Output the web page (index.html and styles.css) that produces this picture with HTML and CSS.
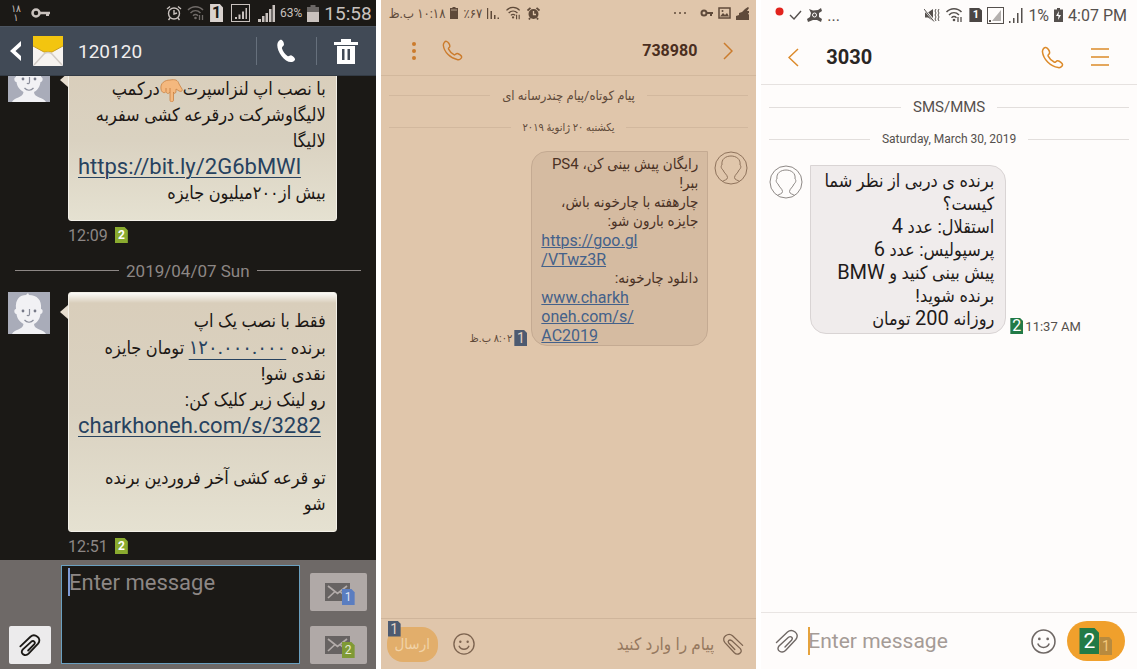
FILE: index.html
```html
<!DOCTYPE html>
<html lang="fa">
<head>
    <meta charset="UTF-8">
    <meta name="viewport" content="width=device-width, initial-scale=1.0">
    <title>SMS</title>
    <link rel="stylesheet" href="styles.css">
</head>
<body>
    <!-- Shared icons -->
    <svg class="sprite" aria-hidden="true">
        <symbol id="clip" viewBox="0 0 24 24">
            <path d="M1.500 13.500 L12.500 3 C17 -1 25.500 4.500 20.800 10.500 L10.500 21.500 C7 25 0.500 21.500 4 17 L13.500 8.300 C16 6.500 18.500 9 16.500 11.200 L10 18" fill="none" stroke="currentColor" stroke-linecap="round"/>
        </symbol>
        <symbol id="smile" viewBox="0 0 24 24">
            <circle cx="12" cy="12" r="11" fill="none" stroke="currentColor" stroke-width="1.500"/>
            <circle cx="8" cy="9.500" r="1.300" fill="currentColor"/>
            <circle cx="16" cy="9.500" r="1.300" fill="currentColor"/>
            <path d="M6.500 14 C8.500 19 15.500 19 17.500 14" fill="none" stroke="currentColor" stroke-width="1.500"/>
        </symbol>
        <symbol id="call" viewBox="0 0 24 24">
            <path d="M5 1.500 C7 2 9 5 9 7 C9 9 6.500 8.500 7.500 10.500 C9 13.500 11 15.500 14 17 C15.500 17.500 15.500 15.300 17.500 15.500 C19.500 15.800 22.500 18 22.500 19.500 C22.500 21 20 23 18 22.500 C9.500 21 2.500 14 1.500 6 C1.500 3.500 3.500 1.200 5 1.500 Z" fill="none" stroke="currentColor" stroke-width="1.600" stroke-linejoin="round"/>
        </symbol>
        <symbol id="person" viewBox="0 0 34 34">
            <circle cx="17" cy="17" r="16" fill="none" stroke="currentColor"/>
            <path d="M8.500 30.500 C10 29 13.500 29 13.500 26.500 C13.500 24 10 22 9 19 C6.500 17 7 14.500 8 14 C7 8 12 5 17 5 C22 5 27 8 26 14 C27 14.500 27.500 17 25 19 C24 22 20.500 24 20.500 26.500 C20.500 29 24 29 25.500 30.500" fill="none" stroke="currentColor"/>
        </symbol>
        <symbol id="face" viewBox="0 0 42 42">
            <rect width="42" height="42" fill="#a9acb9"/>
            <path d="M4 42 C6 37 15 38 15.500 32 C10 29 9 25 8.500 22 C6 22 5.500 17 8 17 C7 7 12 3 18 3 L20 1 L21 3 C29 3 34 8 33 17 C35.500 17 35 22 32.500 22 C32 26 30 30 26 32 C26 38 36 37 38 42 Z" fill="#f1f1f4"/>
            <path d="M21.500 17 V22 C21.500 24 19.500 24 19 23 M16.500 28 C19 31 23 31 25.500 28" fill="none" stroke="#8b8e9b" stroke-width="1.200"/>
            <circle cx="15" cy="19" r="1.400" fill="#777a88"/>
            <circle cx="27" cy="19" r="1.400" fill="#777a88"/>
        </symbol>
        <symbol id="wifi" viewBox="0 0 18 16">
            <g fill="none" stroke="currentColor" stroke-width="1.500">
                <path d="M1 5 C5 0.500 12 0.500 16 5 M3.500 8 C6.500 5 10.500 5 13.500 8 M6 10.700 C7.500 9.300 9.500 9.300 11 10.700"/>
                <path d="M12.500 10 V15 M15.500 10 V15" stroke-width="1.300"/>
            </g>
            <circle cx="8.500" cy="13" r="1.300" fill="currentColor"/>
        </symbol>
        <symbol id="envelope" viewBox="0 0 26 18">
            <rect width="25" height="18" fill="#676362"/>
            <path d="M3 3 L12.500 10.500 L22 3 M3 15 L9.500 9 M22 15 L15.500 9" fill="none" stroke="#b3acaa" stroke-width="1.700"/>
        </symbol>
    </svg>

    <main class="phones">
        <!-- Dark phone -->
        <section class="phone phone-dark" dir="ltr">
            <div class="status">
                <span class="status-day"><span>۱۸</span><span>۱</span></span>
                <svg width="20" height="12" viewBox="0 0 20 12"><circle cx="5" cy="6" r="3.500" fill="none" stroke="currentColor" stroke-width="2.500"/><path d="M9 4.800 H19 V7.200 H18 V9 H15 V7.200 H9 Z" fill="currentColor"/></svg>
                <span class="space"></span>
                <svg width="16" height="16" viewBox="0 0 16 16" fill="none" stroke="currentColor" stroke-width="1.400"><circle cx="8" cy="8.500" r="5.500"/><path d="M8 5 V9 L11 8 M1 4 L4 1.500 M12 1.500 L15 4 M4 13 L2.500 15 M12 13 L13.500 15"/></svg>
                <svg class="dim" width="18" height="16"><use href="#wifi"/></svg>
                <span class="sim sim-light">1</span>
                <svg class="boxed" width="19" height="18" viewBox="0 0 19 18"><rect x="0.500" y="0.500" width="18" height="17" fill="none" stroke="currentColor"/><path d="M4 13 H6 V15 H4 Z M7.500 10.500 H9.500 V15 H7.500 Z M11 7.500 H13 V15 H11 Z M14.500 4 H16 V15 H14.500 Z" fill="currentColor"/></svg>
                <svg width="17" height="17" viewBox="0 0 17 17"><path d="M0 14 H3 V17 H0 Z M4 11 H6.500 V17 H4 Z M7.500 8 H10 V17 H7.500 Z M11 4 H13.500 V17 H11 Z M14.500 0 H17 V17 H14.500 Z" fill="currentColor"/></svg>
                <span class="status-small">63%</span>
                <svg width="12" height="17" viewBox="0 0 12 17"><path d="M3.500 0 H8.500 V2 H12 V17 H0 V2 H3.500 Z" fill="#6b6765"/><path d="M0 7 H12 V17 H0 Z" fill="currentColor"/></svg>
                <span class="status-clock">15:58</span>
            </div>
            <header class="bar">
                <button class="icon-btn" aria-label="Back"><svg width="12" height="22" viewBox="0 0 12 22"><path d="M11 1 V6 L5.500 11 L11 16 V21 L0 11 Z" fill="#fff"/></svg></button>
                <svg class="mail" width="30" height="30" viewBox="0 0 30 30"><rect width="30" height="30" rx="1" fill="#f6f3f0"/><path d="M0 0 H30 V10 L19 16 H11 L0 10 Z" fill="#f3c50f"/><path d="M0 10 L11 16 H19 L30 10" fill="none" stroke="#c99d1c"/><path d="M1 29 L11 18 C13 16 17 16 19 18 L29 29" fill="none" stroke="#d2ccc6" stroke-width="1.500"/></svg>
                <h1>120120</h1>
                <button class="bar-btn" aria-label="Call"><svg width="20" height="24" viewBox="0 0 20 24"><path d="M4 1 C6 0 8 3 8 5.500 C8 7.500 5.500 7.500 6 9.500 C7 12.500 9 15 11.500 17 C13 18 14 15.800 15.500 16.500 C18 17.500 20 20 18.500 21.500 C15.500 25 9.500 22.500 5.500 17 C1 11 -0.500 3.500 4 1 Z" fill="#fff"/></svg></button>
                <button class="bar-btn" aria-label="Delete"><svg width="24" height="25" viewBox="0 0 24 25"><path d="M7 0 H17 V3 H24 V6 H0 V3 H7 Z" fill="#fff"/><path d="M3 7 H21 V25 H3 Z M8 10 V21 H10.500 V10 Z M13.500 10 V21 H16 V10 Z" fill="#fff" fill-rule="evenodd"/></svg></button>
            </header>
            <div class="thread">
                <article class="message">
                    <svg class="avatar" width="42" height="42"><use href="#face"/></svg>
                    <div class="bubble" dir="rtl">
                        <p>با نصب اپ لنزاسپرت<svg class="hand" width="23" height="23" viewBox="0 0 23 23"><path d="M1 10 C0 4 5 1 10 1 C15 0 18 1 19 5 L22 10 C23 12 21 13 19 12 L16 10 V12 C16 15 13.500 15 13.500 13 V21 C13.500 23.500 10 23.500 10 21 V13 C9 15 6.500 15 6 12.500 C5 14.500 1.500 14 1 10 Z" fill="#f4b87e" stroke="#c98243" stroke-width="0.800"/><path d="M6 12 V9 M10 13 V9" stroke="#c77a3d" stroke-width="0.800"/></svg>درکمپ<br>لالیگاوشرکت درقرعه کشی سفربه<br>لالیگا</p>
                        <a href="#" dir="ltr">https://bit.ly/2G6bMWl</a>
                        <p>بیش از۲۰۰میلیون جایزه</p>
                    </div>
                    <div class="stamp">12:09 <span class="sim sim-green">2</span></div>
                </article>
                <div class="rule"><span>2019/04/07 Sun</span></div>
                <article class="message">
                    <svg class="avatar" width="42" height="42"><use href="#face"/></svg>
                    <div class="bubble" dir="rtl">
                        <p>فقط با نصب یک اپ<br>برنده <a class="amount" href="#">۱۲۰.۰۰۰.۰۰۰</a> تومان جایزه<br>نقدی شو!<br>رو لینک زیر کلیک کن:</p>
                        <a href="#" dir="ltr">charkhoneh.com/s/3282</a>
                        <p><br>تو قرعه کشی آخر فروردین برنده<br>شو</p>
                    </div>
                    <div class="stamp">12:51 <span class="sim sim-green">2</span></div>
                </article>
            </div>
            <form class="composer">
                <button type="button" class="attach" aria-label="Attach"><svg width="22" height="24" stroke-width="2"><use href="#clip"/></svg></button>
                <label class="field"><textarea placeholder="Enter message" aria-label="Message"></textarea></label>
                <div class="sends">
                    <button type="button" aria-label="Send with SIM 1"><svg width="26" height="18"><use href="#envelope"/></svg><span class="sim sim-blue">1</span></button>
                    <button type="button" aria-label="Send with SIM 2"><svg width="26" height="18"><use href="#envelope"/></svg><span class="sim sim-olive">2</span></button>
                </div>
            </form>
        </section>

        <!-- Tinted phone, right to left -->
        <section class="phone phone-tan" dir="rtl">
            <div class="status">
                <svg width="13" height="13" viewBox="0 0 13 13"><path d="M0 13 V9 L3 8 V6 L6 5 L9 2 L12 0 L13 1 L11 4 H13 V6 H12 L13 8 V13 Z" fill="currentColor"/></svg>
                <svg width="13" height="12" viewBox="0 0 13 12"><rect x="1" y="1" width="11" height="10" fill="none" stroke="currentColor" stroke-width="1.500"/><path d="M2 9.500 L5 6 L7 8 L9 6 L11 9.500 Z" fill="currentColor"/><circle cx="4.500" cy="4" r="1" fill="currentColor"/></svg>
                <svg width="13" height="8" viewBox="0 0 13 8"><circle cx="4" cy="4" r="2.500" fill="none" stroke="currentColor" stroke-width="2"/><path d="M6 3 H13 V5 H12 V7 H10 V5 H6 Z" fill="currentColor"/></svg>
                <svg class="dots" width="14" height="4" viewBox="0 0 14 4" fill="currentColor"><circle cx="2" cy="2" r="1"/><circle cx="7" cy="2" r="1"/><circle cx="12" cy="2" r="1"/></svg>
                <span class="space"></span>
                <svg width="13" height="13" viewBox="0 0 13 13"><circle cx="6.500" cy="7" r="5" fill="currentColor"/><path d="M0.500 3.500 L3.500 0.800 M9.500 0.800 L12.500 3.500 M3 11 L2 12.500 M10 11 L11 12.500" stroke="currentColor" stroke-width="1.800"/><path d="M6.500 4 V7.500 H9" fill="none" stroke="#e0c6ab" stroke-width="1.300"/></svg>
                <svg width="17" height="14"><use href="#wifi"/></svg>
                <svg width="13" height="13" viewBox="0 0 13 13"><path d="M0 1 H1.200 V12 H0 Z M3.500 4 H5 V12 H3.500 Z M7 8 H8.500 V12 H7 Z M10.500 10.500 H12 V12 H10.500 Z" fill="currentColor"/></svg>
                <span>٪۶۷</span>
                <svg width="8" height="12" viewBox="0 0 8 12"><path d="M2.500 0 H5.500 V1 H8 V12 H0 V1 H2.500 Z" fill="currentColor"/><path d="M1 3 H7" stroke="#b59f89"/></svg>
                <span>۱۰:۱۸ ب.ظ</span>
            </div>
            <header class="bar">
                <button class="icon-btn" aria-label="بازگشت"><svg width="10" height="18" viewBox="0 0 10 18"><path d="M1 1 L9 9 L1 17" fill="none" stroke="currentColor" stroke-width="1.500"/></svg></button>
                <h1>738980</h1>
                <button class="icon-btn" aria-label="تماس"><svg width="21" height="21"><use href="#call"/></svg></button>
                <button class="icon-btn" aria-label="منو"><svg width="4" height="18" viewBox="0 0 4 18" fill="currentColor"><circle cx="2" cy="2" r="2"/><circle cx="2" cy="9" r="2"/><circle cx="2" cy="16" r="2"/></svg></button>
            </header>
            <div class="thread">
                <div class="rule"><span>پیام کوتاه/پیام چندرسانه ای</span></div>
                <div class="rule rule-date"><span>یکشنبه ۲۰ ژانویهٔ ۲۰۱۹</span></div>
                <article class="message">
                    <svg class="avatar" width="34" height="34"><use href="#person"/></svg>
                    <div class="bubble">
                        <p>رایگان پیش بینی کن، PS4<br>ببر!<br>چارهفته با چارخونه باش،<br>جایزه بارون شو:</p>
                        <a href="#" dir="ltr">https://goo.gl<br>/VTwz3R</a>
                        <p>دانلود چارخونه:</p>
                        <a href="#" dir="ltr">www.charkh<br>oneh.com/s/<br>AC2019</a>
                    </div>
                    <div class="stamp"><span class="sim sim-navy">1</span> ۸:۰۲ ب.ظ</div>
                </article>
            </div>
            <form class="composer">
                <button type="button" class="icon-btn flip" aria-label="پیوست"><svg width="22" height="24" stroke-width="1.400"><use href="#clip"/></svg></button>
                <input type="text" placeholder="پیام را وارد کنید" aria-label="پیام">
                <button type="button" class="icon-btn" aria-label="شکلک"><svg width="22" height="22"><use href="#smile"/></svg></button>
                <button type="button" class="send">ارسال<span class="sim sim-navy">1</span></button>
            </form>
        </section>

        <!-- Light phone -->
        <section class="phone phone-light" dir="ltr">
            <div class="status">
                <svg class="record" width="9" height="9" viewBox="0 0 9 9"><circle cx="4.500" cy="4.500" r="4" fill="#e2231d"/></svg>
                <svg width="13" height="10" viewBox="0 0 13 10"><path d="M1 5 L5 9 L12 1" fill="none" stroke="currentColor" stroke-width="1.400"/></svg>
                <svg width="15" height="14" viewBox="0 0 15 14"><path d="M2 1 L6 2.500 L11 2 L14 0 L15 3 L12 5 V9 L15 11 L14 14 L10 12 H6 L1 14 L0 11 L3 9 L4 5 Z" fill="currentColor"/><circle cx="7.500" cy="7" r="2" fill="none" stroke="#fefcfb"/></svg>
                <span class="ellipsis">...</span>
                <span class="space"></span>
                <svg width="16" height="14" viewBox="0 0 16 14"><path d="M1 4.500 H4 L9 1 V13 L4 9.500 H1 Z" fill="currentColor"/><path d="M0.500 1.500 L10 13" stroke="#fefcfb" stroke-width="2"/><path d="M0 1 L10 13.500" stroke="currentColor" stroke-width="1"/><path d="M12 1 L11 3 L12 5 L11 7 L12 9 L11 11 L12 13 M15 1 L14 3 L15 5 L14 7 L15 9 L14 11 L15 13" fill="none" stroke="currentColor"/></svg>
                <svg width="19" height="16"><use href="#wifi"/></svg>
                <span class="sim sim-dark">1</span>
                <svg width="17" height="17" viewBox="0 0 17 17"><rect x="0.500" y="0.500" width="16" height="16" fill="none" stroke="currentColor"/><path d="M14 3 V14 H5 Z" fill="#b4b0ae"/><path d="M2 13 H4 V15 H2 Z" fill="currentColor"/></svg>
                <svg width="14" height="15" viewBox="0 0 14 15"><path d="M0 13 H1.500 V15 H0 Z M4 10 H5.500 V15 H4 Z M8 5 H9.500 V15 H8 Z M12 0 H13.500 V15 H12 Z" fill="currentColor"/></svg>
                <span>1%</span>
                <svg width="9" height="14" viewBox="0 0 9 14"><path d="M3 0 H6 V1.500 H9 V14 H0 V1.500 H3 Z" fill="currentColor"/><path d="M5 3 L2 8 H4.500 L4 12 L7 7 H4.500 Z" fill="#fff"/></svg>
                <span>4:07 PM</span>
            </div>
            <header class="bar">
                <button class="icon-btn" aria-label="Back"><svg width="11" height="19" viewBox="0 0 11 19"><path d="M10 1 L1 9.500 L10 18" fill="none" stroke="currentColor" stroke-width="1.500"/></svg></button>
                <h1>3030</h1>
                <button class="icon-btn" aria-label="Call"><svg width="23" height="23"><use href="#call"/></svg></button>
                <button class="icon-btn" aria-label="Menu"><svg width="18" height="20" viewBox="0 0 18 20"><path d="M0 2 H18 M0 10 H18 M0 18 H18" stroke="currentColor" stroke-width="1.700"/></svg></button>
            </header>
            <div class="thread">
                <div class="rule"><span>SMS/MMS</span></div>
                <div class="rule rule-date"><span>Saturday, March 30, 2019</span></div>
                <article class="message">
                    <svg class="avatar" width="34" height="34"><use href="#person"/></svg>
                    <div class="bubble" dir="rtl">
                        <p>برنده ی دربی از نظر شما<br>کیست؟<br>استقلال: عدد <span class="latin">4</span><br>پرسپولیس: عدد <span class="latin">6</span><br>پیش بینی کنید و <span class="latin">BMW</span><br>برنده شوید!<br>روزانه <span class="latin">200</span> تومان</p>
                    </div>
                    <div class="stamp"><span class="sim sim-forest">2</span> 11:37 AM</div>
                </article>
            </div>
            <form class="composer">
                <button type="button" class="icon-btn" aria-label="Attach"><svg width="24" height="26" stroke-width="1.400"><use href="#clip"/></svg></button>
                <label class="field"><input type="text" placeholder="Enter message" aria-label="Message"></label>
                <button type="button" class="icon-btn" aria-label="Emoji"><svg width="25" height="25"><use href="#smile"/></svg></button>
                <button type="button" class="send" aria-label="Send with SIM 2"><span class="sim sim-forest">2</span><span class="sim sim-back">1</span></button>
            </form>
        </section>
    </main>
</body>
</html>
```
FILE: styles.css
```css
* {
    margin: 0;
    padding: 0;
    box-sizing: border-box;
}

body {
    background-color: #fff;
    font-family: Roboto, "DejaVu Sans Condensed", "DejaVu Sans", sans-serif;
}

button,
input,
textarea {
    font-family: inherit;
    border: none;
    background: none;
    color: inherit;
    outline: none;
}

button {
    cursor: pointer;
}

svg {
    display: block;
    flex: none;
}

.sprite {
    position: absolute;
    width: 0;
    height: 0;
}

.phones {
    display: grid;
    grid-template-columns: repeat(3, minmax(0, 1fr));
    gap: 5px;
    height: 100vh;
}

.phone {
    display: flex;
    flex-direction: column;
    min-height: 0;
    overflow: hidden;
}

.status {
    display: flex;
    align-items: center;
    flex: none;
    white-space: nowrap;
}

.space {
    flex: 1;
}

.bar {
    display: flex;
    align-items: center;
    flex: none;
}

.bar h1 {
    flex: 1;
}

.icon-btn {
    display: flex;
    align-items: center;
    justify-content: center;
    flex: none;
}

.thread {
    flex: 1;
    min-height: 0;
    overflow: hidden;
}

.rule {
    display: flex;
    align-items: center;
    white-space: nowrap;
}

.rule::before,
.rule::after {
    content: "";
    flex: 1;
    height: 1px;
    background-color: currentColor;
}

.bubble {
    white-space: nowrap;
}

.bubble a {
    display: block;
}

/* Little SIM card with a cut corner */
.sim {
    display: inline-flex;
    align-items: center;
    justify-content: center;
    flex: none;
    width: 13px;
    height: 16px;
    font-size: 12px;
    line-height: 16px;
    color: #fff;
    clip-path: polygon(0 0, 75% 0, 100% 20%, 100% 100%, 0 100%);
}

.sim-light { background-color: #d9d2ce; color: #1b1916; font-size: 16px; font-weight: bold; height: 18px; }
.sim-green { background-color: #8aab2f; font-weight: bold; }
.sim-blue { background-color: #5a7dc0; color: #dfe3f2; }
.sim-olive { background-color: #7f9a35; color: #e8ecd4; }
.sim-navy { background-color: #4d5a70; color: #e3d3c4; font-size: 14px; }
.sim-dark { background-color: #4b4644; font-weight: bold; height: 14px; }
.sim-forest { background-color: #227a46; font-size: 16px; }
.sim-back { background-color: #b88a3e; color: #f3c77b; font-size: 14px; }

/* Dark phone */
.phone-dark {
    background-color: #1b1916;
    color: #8d8785;
}

.phone-dark .status {
    height: 26px;
    padding: 0 4px 0 9px;
    gap: 5px;
    color: #c9c2be;
}

.status-day {
    display: flex;
    flex-direction: column;
    align-items: center;
    width: 14px;
    margin-right: 3px;
    font-size: 10px;
    line-height: 9px;
}

.phone-dark .status .dim {
    color: #6f6a67;
}

.phone-dark .status .boxed {
    margin: 0 3px;
}

.status-small {
    font-size: 12px;
}

.status-clock {
    font-size: 19px;
}

.phone-dark .bar {
    height: 50px;
    padding-left: 10px;
    background-color: #414a56;
    border-top: 1px solid #4c5561;
    border-bottom: 1px solid #333b45;
}

.phone-dark .mail {
    margin: 0 15px 0 11px;
}

.phone-dark .bar h1 {
    font-size: 19px;
    font-weight: normal;
    color: #f0eeee;
}

.bar-btn {
    display: flex;
    align-items: center;
    justify-content: center;
    width: 60px;
    height: 28px;
    border-left: 1px solid #66707c;
}

.phone-dark .thread {
    display: flex;
    flex-direction: column;
    justify-content: flex-end;
}

.phone-dark .message {
    display: grid;
    grid-template-columns: 42px 1fr;
    column-gap: 18px;
    padding: 0 39px 0 8px;
    flex: none;
}

.phone-dark .bubble {
    position: relative;
    padding: 15px 10px 14px 9px;
    border: 1px solid #f3f0e8;
    border-radius: 3px;
    background: linear-gradient(#fbfaf7, #d9cebb 10px, #dad2c1 50%, #e5e1d1);
    color: #1d1815;
    font-size: 18px;
    line-height: 26px;
}

.phone-dark .bubble::before {
    content: "";
    position: absolute;
    left: -9px;
    top: 12px;
    border-top: 7px solid transparent;
    border-bottom: 7px solid transparent;
    border-right: 8px solid #e6ddcf;
}

.phone-dark .bubble a {
    color: #27425f;
    font-size: 22px;
    text-decoration-thickness: 1px;
    text-underline-offset: 3px;
}

.phone-dark .bubble .amount {
    display: inline;
    font-size: 20px;
    text-underline-offset: 5px;
}

.hand {
    display: inline-block;
    vertical-align: -7px;
}

.phone-dark .stamp {
    grid-column: 2;
    display: flex;
    align-items: center;
    gap: 7px;
    height: 28px;
    font-size: 16px;
}

.phone-dark .rule {
    height: 43px;
    padding: 0 15px;
    gap: 7px;
    font-size: 17px;
    flex: none;
}

.phone-dark .composer {
    display: flex;
    align-items: flex-end;
    gap: 10px;
    padding: 5px 9px;
    background-color: #6e6967;
}

.attach {
    display: flex;
    align-items: center;
    justify-content: center;
    width: 42px;
    height: 38px;
    border-radius: 2px;
    background-color: #ecebec;
    color: #1b1916;
}

.field {
    position: relative;
    display: flex;
    flex: 1;
    min-width: 0;
}

/* Text cursor */
.field::before {
    content: "";
    position: absolute;
    left: 7px;
    top: 3px;
    width: 2px;
    height: 28px;
    background-color: #7f9bd6;
}

.field textarea {
    width: 100%;
    height: 99px;
    padding: 4px 7px;
    border: 1px solid #6aa0c0;
    background-color: #1b1916;
    font-size: 22px;
    line-height: 26px;
    resize: none;
}

.field textarea::placeholder {
    color: #8d8785;
}

.sends {
    display: flex;
    flex-direction: column;
    gap: 15px;
}

.sends button {
    display: flex;
    align-items: center;
    justify-content: center;
    width: 57px;
    height: 38px;
    padding-left: 3px;
    border-radius: 2px;
    background-color: #b0a9a7;
}

.sends .sim {
    margin: 10px 0 0 -9px;
}

/* Tinted phone */
.phone-tan {
    background-color: #e0c6ab;
    color: #5f4a3a;
}

.phone-tan .status {
    height: 26px;
    padding: 0 7px 0 8px;
    gap: 5px;
    font-size: 13px;
}

.phone-tan .dots {
    margin-right: 8px;
}

.phone-tan .bar {
    height: 50px;
    padding: 0 23px 0 31px;
    gap: 26px;
    color: #cb7b2c;
    border-bottom: 1px solid #d2b89d;
}

.phone-tan .bar h1 {
    font-size: 16px;
    color: #4a2e20;
}

.phone-tan .rule {
    height: 38px;
    padding: 0 8px;
    gap: 12px;
    font-size: 13px;
}

.phone-tan .rule-date {
    height: 26px;
    margin-bottom: 11px;
    font-size: 11px;
}

.phone-tan .rule::before,
.phone-tan .rule::after {
    background-color: #d2b89e;
}

.phone-tan .message,
.phone-light .message {
    display: flex;
    align-items: flex-start;
    padding: 0 8px;
}

.phone-tan .avatar {
    color: #8f735c;
}

.phone-tan .bubble {
    width: 177px;
    margin: 0 6px 0 4px;
    padding: 3px 9px 0;
    border: 1px solid #c4aa92;
    border-radius: 16px 0 16px 16px;
    background-color: #d5bba1;
    color: #4b3225;
    font-size: 15px;
    line-height: 19px;
}

.phone-tan .bubble a {
    color: #44618a;
    font-size: 16px;
    text-decoration-thickness: 1px;
}

.phone-tan .stamp,
.phone-light .stamp {
    display: flex;
    align-items: center;
    align-self: flex-end;
    gap: 2px;
    white-space: nowrap;
}

.phone-tan .stamp {
    font-size: 11px;
}

.phone-tan .composer,
.phone-light .composer {
    display: flex;
    align-items: center;
}

.phone-tan .composer {
    height: 51px;
    padding: 0 12px 0 6px;
    border-top: 1px solid #cfb59b;
    color: #7d6450;
}

.flip {
    transform: scaleX(-1);
}

.phone-tan .composer input {
    flex: 1;
    min-width: 0;
    margin-right: 8px;
    font-size: 17px;
}

.phone-tan .composer input::placeholder {
    color: #96795f;
}

.send {
    position: relative;
    flex: none;
    border-radius: 20px;
}

.phone-tan .send {
    width: 51px;
    height: 35px;
    margin-right: 15px;
    border-radius: 16px;
    background-color: #e2ae6b;
    color: #f1d3a8;
    font-size: 15px;
}

.phone-tan .send .sim {
    position: absolute;
    left: 1px;
    top: -6px;
}

/* Light phone */
.phone-light {
    background-color: #fefcfb;
    color: #55504d;
}

.phone-light .status {
    height: 30px;
    padding: 0 10px 0 14px;
    gap: 5px;
    font-size: 16px;
}

.phone-light .status .sim {
    font-size: 11px;
}

.record {
    margin-bottom: 8px;
}

.phone-light .bar {
    height: 55px;
    padding: 0 28px 0 27px;
    gap: 27px;
    color: #dc8a2a;
    border-bottom: 1px solid #e6e2e0;
}

.phone-light .bar h1 {
    font-size: 20px;
    color: #2a2624;
}

.phone-light .rule {
    height: 44px;
    padding: 0 8px;
    gap: 12px;
    font-size: 15px;
}

.phone-light .rule-date {
    height: 20px;
    margin-bottom: 16px;
    font-size: 12px;
}

.phone-light .rule::before,
.phone-light .rule::after {
    background-color: #e2dedc;
}

.phone-light .avatar {
    color: #8e8986;
}

.phone-light .bubble {
    width: 196px;
    margin: 0 4px 0 7px;
    padding: 3px 11px;
    border: 1px solid #d9d4d4;
    border-radius: 0 16px 16px 16px;
    background-color: #f0ecec;
    color: #1f1b1a;
    font-size: 18px;
    line-height: 23px;
}

.latin {
    font-size: 20px;
    line-height: 20px;
}

.phone-light .stamp {
    font-size: 13px;
}

.phone-light .composer {
    height: 57px;
    padding: 0 12px 0 14px;
    border-top: 1px solid #e9e5e3;
    color: #6f6865;
}

.phone-light .field {
    margin: 0 12px 0 9px;
}

.phone-light .field::before {
    left: 0;
    top: 0;
    background-color: #e5a23c;
}

.phone-light .field input {
    width: 100%;
    height: 28px;
    font-size: 21px;
}

.phone-light .field input::placeholder {
    color: #a59b96;
}

.phone-light .send {
    display: flex;
    align-items: center;
    justify-content: center;
    width: 58px;
    height: 40px;
    margin-left: 11px;
    background-color: #f0a02c;
}

.phone-light .send .sim-forest {
    width: 20px;
    height: 26px;
    font-size: 21px;
}

.phone-light .send .sim-back {
    height: 18px;
    margin-top: 10px;
}
```
